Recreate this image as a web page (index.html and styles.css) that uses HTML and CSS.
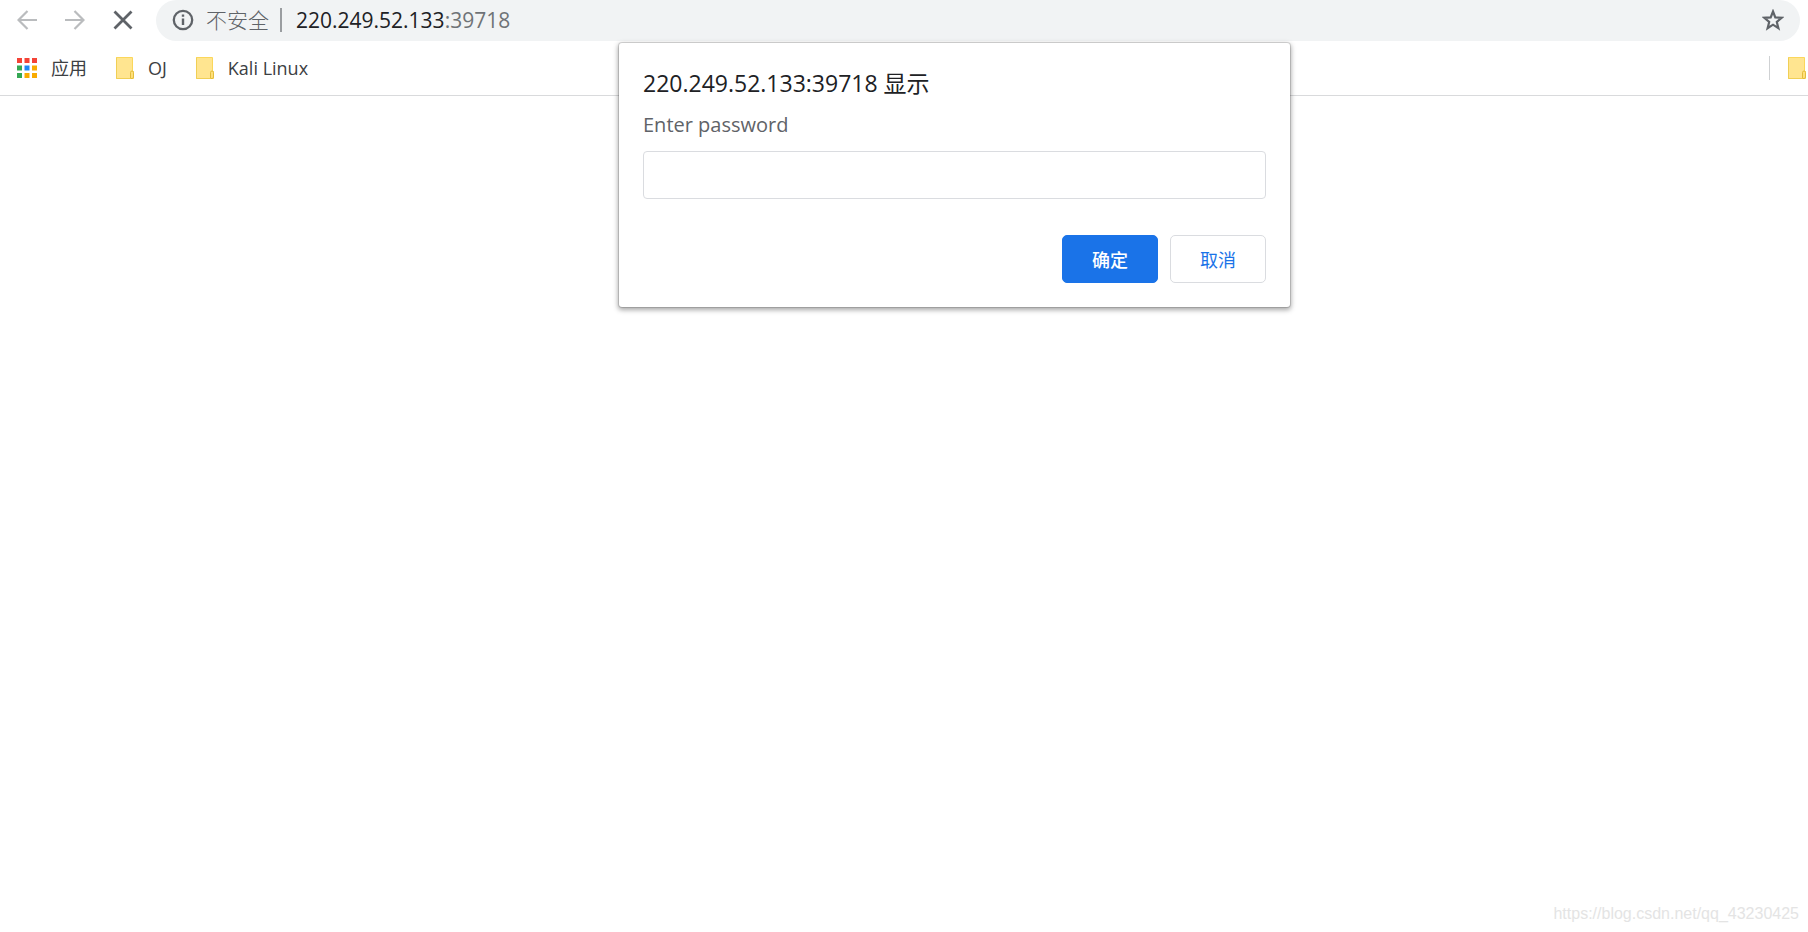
FILE: index.html
```html
<!DOCTYPE html>
<html lang="zh-CN">
<head>
    <meta charset="UTF-8">
    <meta name="viewport" content="width=device-width, initial-scale=1.0">
    <title>220.249.52.133:39718</title>
    <link rel="stylesheet" href="styles.css">
</head>
<body>
    <svg class="defs" aria-hidden="true">
        <symbol id="folder" viewBox="0 0 18 22">
            <path d="M.5.5h16V14.500h1v7H.5z" fill="#ffe590" stroke="#fbd75b"/>
            <path d="M.5.5v21h14" fill="none" stroke="#f0cf55"/>
            <path d="M14.500 21v-5.500q0-1.500 1.500-1.500t1.500 1.500V20q0 1.500-1.500 1.500h-1.500" fill="#ffe07a" stroke="#e3bd3c"/>
        </symbol>
    </svg>

    <header class="browser">
        <div class="toolbar">
            <nav class="nav">
                <button type="button" class="icon-btn" aria-label="后退" disabled>
                    <svg width="20" height="20" viewBox="0 0 20 20" fill="none" stroke="#babcbe" stroke-width="2.200"><path d="M20 10H1.500M10.500 1 1.500 10l9 9"/></svg>
                </button>
                <button type="button" class="icon-btn" aria-label="前进" disabled>
                    <svg width="20" height="20" viewBox="0 0 20 20" fill="none" stroke="#babcbe" stroke-width="2.200"><path d="M0 10h18.500M9.500 1l9 9-9 9"/></svg>
                </button>
                <button type="button" class="icon-btn" aria-label="停止">
                    <svg width="20" height="20" viewBox="0 0 20 20" fill="none" stroke="#5f6368" stroke-width="2.800"><path d="M1.500 1.500l17 17M18.500 1.500l-17 17"/></svg>
                </button>
            </nav>
            <div class="omnibox">
                <svg width="22" height="22" viewBox="0 0 22 22"><circle cx="11" cy="11" r="9.200" fill="none" stroke="#5f6368" stroke-width="2.300"/><path d="M9.800 5.500h2.400v2.300H9.800zM9.800 9.500h2.400v6.500H9.800z" fill="#5f6368"/></svg>
                <span class="security">不安全</span>
                <span class="url">220.249.52.133<span class="port">:39718</span></span>
                <button type="button" class="icon-btn star" aria-label="收藏">
                    <svg width="22" height="22" viewBox="0 0 22 22" fill="none" stroke="#5f6368" stroke-width="2.200"><path d="M11 2.500l2.300 5.900 6.400.4-4.900 4.100 1.600 6.300L11 15.700l-5.400 3.500 1.600-6.300-4.900-4.100 6.400-.4z"/></svg>
                </button>
            </div>
        </div>
        <nav class="bookmarks">
            <a class="bookmark" href="#">
                <svg class="apps" width="20" height="20" viewBox="0 0 20 20">
                    <path d="M0 0h5v5H0zM7.500 0h5v5h-5zM15 0h5v5h-5z" fill="#f44336"/>
                    <path d="M0 7.500h5v5H0zM0 15h5v5H0z" fill="#34a853"/>
                    <path d="M7.500 7.500h5v5h-5z" fill="#1e88f5"/>
                    <path d="M15 7.500h5v5h-5zM7.500 15h5v5h-5zM15 15h5v5h-5z" fill="#f9ab00"/>
                </svg>
                应用
            </a>
            <a class="bookmark" href="#"><svg width="18" height="22"><use href="#folder"/></svg>OJ</a>
            <a class="bookmark" href="#"><svg width="18" height="22"><use href="#folder"/></svg>Kali Linux</a>
            <a class="other" href="#" aria-label="其他书签"><svg width="18" height="22"><use href="#folder"/></svg></a>
        </nav>
    </header>

    <form class="dialog" role="dialog" aria-labelledby="dialogTitle">
        <h1 id="dialogTitle">220.249.52.133:39718 显示</h1>
        <label for="password">Enter password</label>
        <input type="text" id="password">
        <div class="actions">
            <button type="submit" class="btn primary">确定</button>
            <button type="button" class="btn">取消</button>
        </div>
    </form>

    <footer class="watermark">https://blog.csdn.net/qq_43230425</footer>
</body>
</html>
```
FILE: styles.css
```css
* {
    box-sizing: border-box;
}
body {
    margin: 0;
    min-height: 100vh;
    display: flex;
    flex-direction: column;
    background: #fff;
    color: #202124;
    font-family: "Open Sans", "Noto Sans CJK SC", sans-serif;
}
svg {
    display: block;
    flex: none;
}
.defs {
    position: absolute;
    width: 0;
    height: 0;
}
.browser {
    border-bottom: 1px solid #d9dadc;
}
.toolbar {
    display: flex;
    height: 41px;
    padding-right: 8px;
}
.nav {
    display: flex;
    gap: 28px;
    padding: 0 23px 2px 17px;
}
.icon-btn {
    display: flex;
    align-items: center;
    padding: 0;
    border: none;
    background: none;
}
.omnibox {
    flex: 1;
    display: flex;
    align-items: center;
    padding: 0 16px 2px;
    border-radius: 21px;
    background: #f1f3f4;
    font-size: 21px;
    line-height: 24px;
}
.security {
    margin-left: 12px;
    padding-right: 11px;
    border-right: 2px solid #9a9da0;
    color: #5f6368;
    font-weight: 300;
}
.url {
    margin-left: 14px;
}
.port {
    color: #6f7377;
}
.star {
    margin-left: auto;
}
.bookmarks {
    display: flex;
    align-items: center;
    gap: 29px;
    height: 54px;
    padding-left: 17px;
    overflow: hidden;
}
.bookmark {
    display: flex;
    align-items: center;
    gap: 14px;
    color: #3c4043;
    font-size: 18px;
    line-height: 24px;
    text-decoration: none;
}
.other {
    margin-left: auto;
    padding: 1px 2px 1px 18px;
    border-left: 1px solid #cfd1d3;
}
.dialog {
    position: absolute;
    top: 43px;
    left: 50%;
    width: 671px;
    margin-left: -285px;
    padding: 24px;
    border-radius: 3px;
    background: #fff;
    box-shadow: 0 0 0 1px rgba(0, 0, 0, 0.12), 0 2px 5px 1px rgba(0, 0, 0, 0.35);
}
.dialog h1 {
    margin: 0;
    font-size: 23px;
    font-weight: 400;
    line-height: 32px;
}
.dialog label {
    display: block;
    padding: 10px 0;
    color: #5f6368;
    font-size: 20px;
    line-height: 32px;
}
.dialog input {
    display: block;
    width: 100%;
    height: 48px;
    padding: 0 12px;
    border: 1px solid #dadce0;
    border-radius: 4px;
    font: inherit;
    font-size: 20px;
}
.actions {
    display: flex;
    justify-content: flex-end;
    gap: 12px;
    margin-top: 36px;
}
.btn {
    width: 96px;
    height: 48px;
    padding: 0;
    border: 1px solid #dadce0;
    border-radius: 5px;
    background: #fff;
    color: #1a73e8;
    font-family: inherit;
    font-size: 18px;
}
.primary {
    border-color: #1a73e8;
    background: #1a73e8;
    color: #fff;
    font-weight: 500;
}
.watermark {
    margin-top: auto;
    padding: 0 9px 8px;
    color: #e4e4e4;
    font-family: "Liberation Sans", Arial, sans-serif;
    font-size: 16px;
    line-height: 20px;
    text-align: right;
}
```
